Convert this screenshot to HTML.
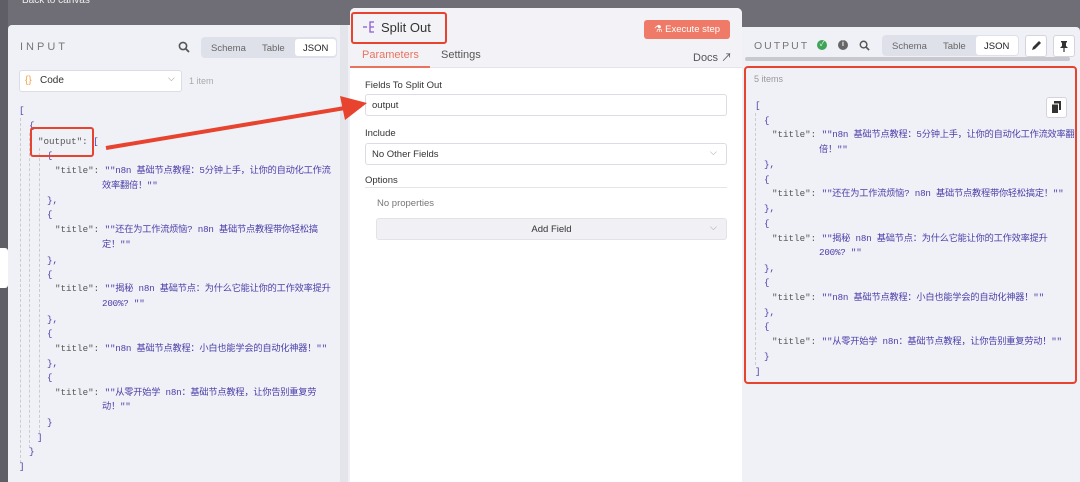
<!DOCTYPE html><html><head><meta charset="utf-8"><style>
*{box-sizing:border-box;margin:0;padding:0}
body{width:1080px;height:482px;overflow:hidden;background:#6f6e77;font-family:"Liberation Sans","Noto Sans CJK SC",sans-serif;position:relative}
.a{position:absolute;white-space:nowrap}
.m{font-family:"Liberation Mono","Noto Sans CJK SC",monospace;font-size:9.2px;line-height:11px;color:#555}
.v{color:#4a3ea8;letter-spacing:-0.2px}
.p{color:#4a3ea8}
.tab{position:absolute;font-size:9.5px;color:#666}
</style></head><body>
<div class="a" style="left:22px;top:-5px;color:#eee;font-size:10px">Back to canvas</div>
<div class="a" style="left:0;top:0;width:8px;height:482px;background:#5f5e67"></div>
<div class="a" style="left:0;top:248px;width:8px;height:40px;background:#fff;border-radius:0 3px 3px 0"></div>
<!-- left panel -->
<div class="a" style="left:8px;top:25px;width:342px;height:457px;background:#f0f1f7;border-radius:4px 0 0 0"></div>
<div class="a" style="left:20px;top:41px;font-size:11px;letter-spacing:3px;color:#777">INPUT</div>
<svg class="a" style="left:178px;top:41px" width="12" height="12" viewBox="0 0 12 12"><circle cx="5" cy="5" r="3.6" fill="none" stroke="#555" stroke-width="1.6"/><line x1="7.6" y1="7.6" x2="11" y2="11" stroke="#555" stroke-width="1.8"/></svg>
<div class="a" style="left:201px;top:37px;width:136px;height:21px;background:#dfe1ea;border-radius:4px"></div>
<div class="a" style="left:295px;top:39px;width:41px;height:17px;background:#fff;border-radius:3px"></div>
<div class="tab" style="left:211px;top:43px">Schema</div><div class="tab" style="left:262px;top:43px">Table</div><div class="tab" style="left:303px;top:43px;color:#222">JSON</div>
<div class="a" style="left:19px;top:70px;width:163px;height:22px;background:#fff;border:1px solid #dcdde4;border-radius:3px"></div>
<div class="a" style="left:25px;top:75px;font-size:10px;color:#f0a050">{}</div>
<div class="a" style="left:40px;top:75px;font-size:10px;color:#333">Code</div>
<div class="a" style="left:168px;top:73px;font-size:9px;color:#888">⌵</div>
<div class="a" style="left:189px;top:76px;font-size:9px;color:#aaa">1 item</div>
<div class="a" style="left:20px;top:118px;height:345px;border-left:1px dashed #ccc"></div>
<div class="a" style="left:29px;top:133px;height:315px;border-left:1px dashed #ccc"></div>
<div class="a" style="left:39px;top:148px;height:285px;border-left:1px dashed #ccc"></div>
<div class="a m p" style="left:19px;top:105px">[</div>
<div class="a m p" style="left:29px;top:120px">{</div>
<div class="a m" style="left:38px;top:136px">"output": <span class="p">[</span></div>
<div class="a m p" style="left:47px;top:150px">{</div>
<div class="a m" style="left:55px;top:165px">"title": <span class="v">""n8n 基础节点教程：5分钟上手，让你的自动化工作流</span></div>
<div class="a m v" style="left:102px;top:180px">效率翻倍！""</div>
<div class="a m p" style="left:47px;top:195px">},</div>
<div class="a m p" style="left:47px;top:209px">{</div>
<div class="a m" style="left:55px;top:224px">"title": <span class="v">""还在为工作流烦恼? n8n 基础节点教程带你轻松搞</span></div>
<div class="a m v" style="left:102px;top:239px">定！""</div>
<div class="a m p" style="left:47px;top:255px">},</div>
<div class="a m p" style="left:47px;top:269px">{</div>
<div class="a m" style="left:55px;top:283px">"title": <span class="v">""揭秘 n8n 基础节点：为什么它能让你的工作效率提升</span></div>
<div class="a m v" style="left:102px;top:298px">200%? ""</div>
<div class="a m p" style="left:47px;top:314px">},</div>
<div class="a m p" style="left:47px;top:328px">{</div>
<div class="a m" style="left:55px;top:343px">"title": <span class="v">""n8n 基础节点教程：小白也能学会的自动化神器！""</span></div>
<div class="a m p" style="left:47px;top:358px">},</div>
<div class="a m p" style="left:47px;top:372px">{</div>
<div class="a m" style="left:55px;top:387px">"title": <span class="v">""从零开始学 n8n：基础节点教程，让你告别重复劳</span></div>
<div class="a m v" style="left:102px;top:401px">动！""</div>
<div class="a m p" style="left:47px;top:417px">}</div>
<div class="a m p" style="left:37px;top:432px">]</div>
<div class="a m p" style="left:29px;top:446px">}</div>
<div class="a m p" style="left:19px;top:461px">]</div>
<div class="a" style="left:30px;top:127px;width:64px;height:30px;border:2px solid #e8432e;border-radius:3px"></div>
<div class="a" style="left:340px;top:25px;width:8px;height:457px;background:#e4e5ea"></div>
<!-- middle panel -->
<div class="a" style="left:350px;top:8px;width:392px;height:474px;background:#fff;border-radius:5px 5px 0 0;overflow:hidden">
 <div class="a" style="left:0;top:0;width:392px;height:60px;background:#f3f3f7;border-bottom:1px solid #e4e4ea"></div>
</div>
<svg class="a" style="left:362px;top:20px" width="14" height="14" viewBox="0 0 14 14" fill="none" stroke="#8a5cd0" stroke-width="1.3"><line x1="1" y1="7" x2="5" y2="7"/><path d="M12 2H8v10h4M8 7h4"/></svg>
<div class="a" style="left:381px;top:20px;font-size:13px;color:#333">Split Out</div>
<div class="a" style="left:351px;top:12px;width:96px;height:32px;border:2px solid #e8432e;border-radius:3px"></div>
<div class="a" style="left:644px;top:20px;width:86px;height:19px;background:#ef7a67;border-radius:3px;color:#fff;font-size:9.5px;padding:4px 0 0 10px">⚗ Execute step</div>
<div class="a" style="left:362px;top:49px;font-size:11px;color:#e8735f">Parameters</div>
<div class="a" style="left:350px;top:66px;width:80px;height:2px;background:#e8735f"></div>
<div class="a" style="left:441px;top:49px;font-size:11px;color:#555">Settings</div>
<div class="a" style="left:693px;top:49px;font-size:11px;color:#555">Docs ↗</div>
<div class="a" style="left:365px;top:80px;font-size:9.5px;color:#333">Fields To Split Out</div>
<div class="a" style="left:365px;top:94px;width:362px;height:22px;border:1px solid #dcdde4;border-radius:3px;font-size:9.5px;color:#333;padding:5px 6px">output</div>
<div class="a" style="left:365px;top:128px;font-size:9.5px;color:#333">Include</div>
<div class="a" style="left:365px;top:143px;width:362px;height:22px;border:1px solid #dcdde4;border-radius:3px;font-size:9.5px;color:#333;padding:5px 6px">No Other Fields</div>
<div class="a" style="left:710px;top:147px;font-size:9px;color:#999">⌵</div>
<div class="a" style="left:365px;top:175px;font-size:9.5px;color:#333">Options</div>
<div class="a" style="left:365px;top:187px;width:362px;border-top:1px solid #e4e4ea"></div>
<div class="a" style="left:377px;top:198px;font-size:9.5px;color:#777">No properties</div>
<div class="a" style="left:376px;top:218px;width:351px;height:22px;background:#f1f1f5;border:1px solid #e2e2e8;border-radius:3px;font-size:9.5px;color:#333;text-align:center;padding-top:5px">Add Field</div>
<div class="a" style="left:710px;top:222px;font-size:9px;color:#999">⌵</div>
<!-- right panel -->
<div class="a" style="left:742px;top:27px;width:338px;height:455px;background:#f0f1f7;border-radius:0 4px 0 0"></div>
<div class="a" style="left:754px;top:40px;font-size:10.5px;letter-spacing:2px;color:#777">OUTPUT</div>
<div class="a" style="left:817px;top:40px;width:10px;height:10px;border-radius:50%;background:#3fa35a;color:#fff;font-size:7px;text-align:center;line-height:10px">✓</div>
<div class="a" style="left:838px;top:40px;width:10px;height:10px;border-radius:50%;background:#666;color:#fff;font-size:7px;text-align:center;line-height:10px;font-weight:bold">i</div>
<svg class="a" style="left:859px;top:40px" width="11" height="11" viewBox="0 0 12 12"><circle cx="5" cy="5" r="3.6" fill="none" stroke="#555" stroke-width="1.6"/><line x1="7.6" y1="7.6" x2="11" y2="11" stroke="#555" stroke-width="1.8"/></svg>
<div class="a" style="left:882px;top:35px;width:137px;height:21px;background:#dfe1ea;border-radius:4px"></div>
<div class="a" style="left:976px;top:36px;width:42px;height:19px;background:#fff;border-radius:3px"></div>
<div class="tab" style="left:892px;top:41px">Schema</div><div class="tab" style="left:943px;top:41px">Table</div><div class="tab" style="left:984px;top:41px;color:#222">JSON</div>
<div class="a" style="left:1025px;top:35px;width:22px;height:22px;background:#fff;border:1px solid #d4d4dc;border-radius:3px"></div>
<svg class="a" style="left:1030px;top:40px" width="12" height="12" viewBox="0 0 12 12"><path d="M2 10l1-3 6-6 2 2-6 6z" fill="#333"/></svg>
<div class="a" style="left:1053px;top:35px;width:22px;height:22px;background:#fff;border:1px solid #d4d4dc;border-radius:3px"></div>
<svg class="a" style="left:1058px;top:40px" width="12" height="12" viewBox="0 0 12 12"><path d="M3 1h6v1l-1 1v3l2 2H2l2-2V3L3 2z" fill="#333"/><rect x="5.4" y="8" width="1.2" height="4" fill="#333"/></svg>
<div class="a" style="left:745px;top:57px;width:325px;height:4px;background:#c8c8ce;border-radius:2px"></div>
<div class="a" style="left:754px;top:74px;font-size:9px;color:#999">5 items</div>
<div class="a" style="left:1046px;top:97px;width:21px;height:21px;background:#fff;border:1px solid #d4d4dc;border-radius:3px"></div>
<svg class="a" style="left:1051px;top:101px" width="11" height="13" viewBox="0 0 11 13"><rect x="3" y="0" width="7" height="9" fill="#333"/><rect x="0.5" y="3" width="7" height="9.5" fill="#333" stroke="#fff" stroke-width="1"/></svg>
<div class="a" style="left:755px;top:113px;height:252px;border-left:1px dashed #ccc"></div>
<div class="a m p" style="left:755px;top:100px">[</div>
<div class="a m p" style="left:764px;top:115px">{</div>
<div class="a m" style="left:772px;top:129px">"title": <span class="v">""n8n 基础节点教程：5分钟上手，让你的自动化工作流效率翻</span></div>
<div class="a m v" style="left:819px;top:144px">倍！""</div>
<div class="a m p" style="left:764px;top:159px">},</div>
<div class="a m p" style="left:764px;top:174px">{</div>
<div class="a m" style="left:772px;top:188px">"title": <span class="v">""还在为工作流烦恼? n8n 基础节点教程带你轻松搞定！""</span></div>
<div class="a m p" style="left:764px;top:203px">},</div>
<div class="a m p" style="left:764px;top:218px">{</div>
<div class="a m" style="left:772px;top:233px">"title": <span class="v">""揭秘 n8n 基础节点：为什么它能让你的工作效率提升</span></div>
<div class="a m v" style="left:819px;top:247px">200%? ""</div>
<div class="a m p" style="left:764px;top:263px">},</div>
<div class="a m p" style="left:764px;top:277px">{</div>
<div class="a m" style="left:772px;top:292px">"title": <span class="v">""n8n 基础节点教程：小白也能学会的自动化神器！""</span></div>
<div class="a m p" style="left:764px;top:307px">},</div>
<div class="a m p" style="left:764px;top:321px">{</div>
<div class="a m" style="left:772px;top:336px">"title": <span class="v">""从零开始学 n8n：基础节点教程，让你告别重复劳动！""</span></div>
<div class="a m p" style="left:764px;top:351px">}</div>
<div class="a m p" style="left:755px;top:366px">]</div>
<div class="a" style="left:744px;top:66px;width:333px;height:318px;border:2px solid #e8432e;border-radius:4px"></div>
<!-- arrow -->
<svg class="a" style="left:0;top:0" width="1080" height="482"><line x1="106" y1="148" x2="345" y2="108" stroke="#e8432e" stroke-width="4"/><polygon points="367,103 340,96 345,120" fill="#e8432e"/></svg>
</body></html>
